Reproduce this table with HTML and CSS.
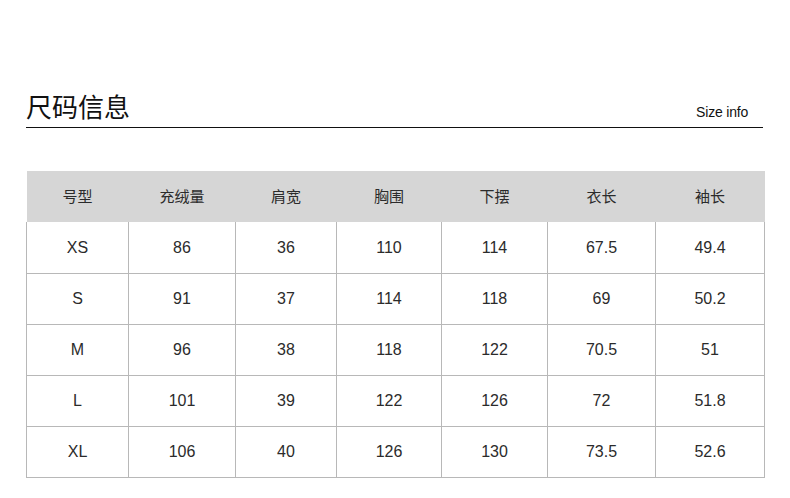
FILE: index.html
```html
<!DOCTYPE html>
<html>
<head>
<meta charset="utf-8">
<link rel="stylesheet" href="styles.css">
</head>
<body>
<div class="page">
  <div class="title-bar">
    <h1 class="title">尺码信息</h1>
    <span class="subtitle">Size info</span>
  </div>
  <table class="size-table">
    <colgroup>
      <col style="width:102px"><col style="width:107px"><col style="width:101px"><col style="width:105px"><col style="width:106px"><col style="width:108px"><col style="width:109px">
    </colgroup>
    <thead>
      <tr><th>号型</th><th>充绒量</th><th>肩宽</th><th>胸围</th><th>下摆</th><th>衣长</th><th>袖长</th></tr>
    </thead>
    <tbody>
      <tr><td>XS</td><td>86</td><td>36</td><td>110</td><td>114</td><td>67.5</td><td>49.4</td></tr>
      <tr><td>S</td><td>91</td><td>37</td><td>114</td><td>118</td><td>69</td><td>50.2</td></tr>
      <tr><td>M</td><td>96</td><td>38</td><td>118</td><td>122</td><td>70.5</td><td>51</td></tr>
      <tr><td>L</td><td>101</td><td>39</td><td>122</td><td>126</td><td>72</td><td>51.8</td></tr>
      <tr><td>XL</td><td>106</td><td>40</td><td>126</td><td>130</td><td>73.5</td><td>52.6</td></tr>
    </tbody>
  </table>
</div>
</body>
</html>
```
FILE: styles.css
```css
html, body {
  margin: 0;
  padding: 0;
  background: #ffffff;
}
body {
  font-family: "Liberation Sans", Arial, "Noto Sans CJK SC", sans-serif;
  color: #2b2b2b;
}
.page {
  padding: 90px 26px 0 26px;
  width: 738px;
}
.title-bar {
  display: flex;
  justify-content: space-between;
  align-items: flex-end;
  border-bottom: 1px solid #111111;
  height: 37px;
  margin-right: 1px;
  padding-right: 15px;
}
.title {
  margin: 0;
  padding-bottom: 4px;
  font-family: "Noto Sans CJK SC", sans-serif;
  font-weight: 400;
  font-size: 26px;
  line-height: 34px;
  color: #111111;
}
.subtitle {
  font-family: "Liberation Sans", Arial, sans-serif;
  font-size: 14px;
  line-height: 16px;
  color: #111111;
  padding-bottom: 7px;
  letter-spacing: -0.2px;
}
.size-table {
  margin-top: 43px;
  width: 738px;
  border-collapse: collapse;
  table-layout: fixed;
}
.size-table th {
  background: #d6d6d6;
  height: 49px;
  padding: 0 0 2px 0;
  font-family: "Noto Sans CJK SC", sans-serif;
  font-weight: 400;
  font-size: 15px;
  color: #2b2b2b;
  text-align: center;
  border: none;
}
.size-table td {
  height: 50px;
  padding: 0;
  border: 1px solid #b8b8b8;
  text-align: center;
  font-size: 16px;
  color: #2b2b2b;
}
.size-table tbody tr:first-child td {
  border-top: none;
  height: 51px;
}
```
